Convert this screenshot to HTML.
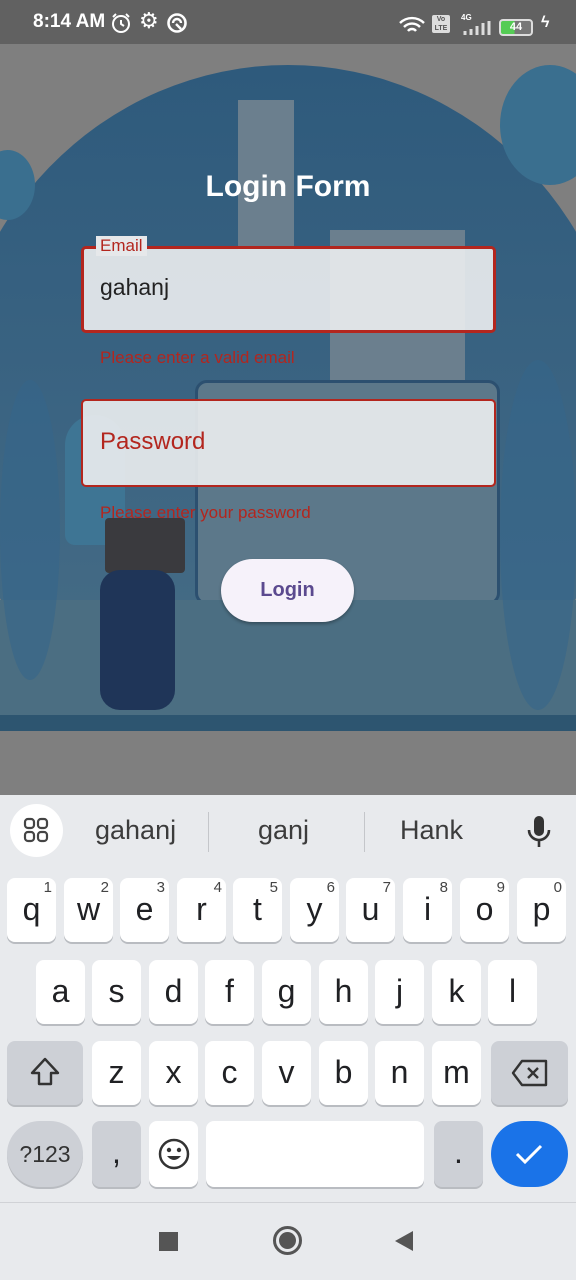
<!DOCTYPE html>
<html><head><meta charset="utf-8"><style>
*{margin:0;padding:0;box-sizing:border-box}
body{width:576px;height:1280px;overflow:hidden;background:#7f7f7f;font-family:"Liberation Sans",Roboto,sans-serif;position:relative}
.abs{position:absolute}
.key{position:absolute;background:#fff;border-radius:8px;box-shadow:0 2px 0 #b9bcc1;font-size:32px;color:#202124;text-align:center;line-height:62px;height:64px;width:49px}
.key sup{position:absolute;top:2px;right:4px;font-size:15px;line-height:15px;color:#444}
.gk{background:#cdd0d6}
</style></head><body>
<div class="abs" style="top:0;left:0;width:576px;height:44px;background:#616161;color:#fff;font-size:19px;font-weight:bold">
 <span class="abs" style="left:33px;top:11px">8:14 AM</span>
 <svg class="abs" style="left:110px;top:12px" width="22" height="22"><circle cx="11" cy="12" r="8" fill="none" stroke="#fff" stroke-width="2"/><path d="M11 8v4l3 2M3 5l3-3M19 5l-3-3" stroke="#fff" stroke-width="2" fill="none"/></svg>
 <span class="abs" style="left:139px;top:8px;font-size:22px;font-weight:normal">⚙</span>
 <svg class="abs" style="left:166px;top:12px" width="22" height="22"><circle cx="11" cy="11" r="8.5" fill="none" stroke="#fff" stroke-width="2.6"/><path d="M7 11a4 4 0 0 1 8 0M10 12l5 5" stroke="#fff" stroke-width="2.4" fill="none"/></svg>
 <svg class="abs" style="left:398px;top:16px" width="28" height="20"><path d="M2 7a17 17 0 0 1 24 0M6 11a11 11 0 0 1 16 0M10 15a5 5 0 0 1 8 0" stroke="#fff" stroke-width="2.4" fill="none"/></svg>
 <span class="abs" style="left:432px;top:15px;width:18px;height:18px;background:#ddd;border-radius:2px;font-size:7px;color:#555;text-align:center;line-height:9px">Vo<br>LTE</span>
 <span class="abs" style="left:461px;top:13px;font-size:8px">4G</span>
 <svg class="abs" style="left:462px;top:20px" width="30" height="16"><path d="M3 15v-4M9 15v-6M15 15V6M21 15V3M27 15V1" stroke="#ddd" stroke-width="3"/></svg>
 <span class="abs" style="left:499px;top:19px;width:34px;height:17px;border:2px solid #ddd;border-radius:4px;background:linear-gradient(90deg,#5c5 45%,#777 45%);font-size:11px;color:#fff;text-align:center;line-height:13px">44</span>
 <span class="abs" style="left:541px;top:14px;font-size:16px">ϟ</span>
</div>
<!-- illustration -->
<div class="abs" style="left:0;top:44px;width:576px;height:687px;overflow:hidden">
<div class="abs" style="left:-50px;top:21px;width:676px;height:700px;border-radius:50%;background:linear-gradient(180deg,#2e5a7c,#3b6482 50%,#4a6f86);"></div>
<div class="abs" style="left:500px;top:21px;width:100px;height:120px;border-radius:50%;background:#3a6f8f"></div>
<div class="abs" style="left:-20px;top:106px;width:55px;height:70px;border-radius:50%;background:#3a6f8f"></div>
<div class="abs" style="left:238px;top:56px;width:56px;height:150px;background:#6b7f8e"></div>
<div class="abs" style="left:330px;top:186px;width:135px;height:150px;background:#6b7f8e"></div>
<div class="abs" style="left:195px;top:336px;width:305px;height:225px;border:3px solid #2c5070;border-radius:12px;background:#5c788a"></div>
<div class="abs" style="left:0;top:556px;width:576px;height:115px;background:#4b6e82"></div>
<div class="abs" style="left:0;top:671px;width:576px;height:16px;background:#2d5570"></div>
<div class="abs" style="left:65px;top:371px;width:60px;height:130px;border-radius:30px 30px 10px 10px;background:#3e7594"></div>
<div class="abs" style="left:105px;top:474px;width:80px;height:55px;background:#3a3a3e;border-radius:4px"></div>
<div class="abs" style="left:100px;top:526px;width:75px;height:140px;background:#1f3558;border-radius:20px"></div>
<div class="abs" style="left:0;top:336px;width:60px;height:300px;background:#35658a;border-radius:50%;opacity:.6"></div>
<div class="abs" style="left:500px;top:316px;width:76px;height:350px;background:#35658a;border-radius:50%;opacity:.6"></div>
</div>

<div class="abs" style="left:0;top:170px;width:576px;text-align:center;color:#fff;font-size:30px;font-weight:bold">Login Form</div>
<div class="abs" style="left:81px;top:246px;width:415px;height:87px;border:3px solid #b3261e;border-radius:5px;background:rgba(236,238,240,.9)"></div>
<div class="abs" style="left:96px;top:236px;padding:0 4px;background:#e6e8ea;color:#b3261e;font-size:17px;line-height:20px">Email</div>
<div class="abs" style="left:100px;top:274px;font-size:23px;color:#222">gahanj</div>
<div class="abs" style="left:100px;top:348px;font-size:17px;color:#b3261e">Please enter a valid email</div>
<div class="abs" style="left:81px;top:399px;width:415px;height:88px;border:2px solid #b3261e;border-radius:5px;background:rgba(236,238,240,.9)"></div>
<div class="abs" style="left:100px;top:428px;font-size:24px;color:#b3261e">Password</div>
<div class="abs" style="left:100px;top:503px;font-size:17px;color:#b3261e">Please enter your password</div>
<div class="abs" style="left:221px;top:559px;width:133px;height:63px;border-radius:32px;background:#f6f2fa;box-shadow:0 2px 3px rgba(0,0,0,.3);text-align:center;line-height:63px;font-size:20px;font-weight:bold;color:#5b4a8f">Login</div>

<!-- keyboard -->
<div class="abs" style="left:0;top:795px;width:576px;height:485px;background:#e8eaed"></div>
<div class="abs" style="left:10px;top:804px;width:53px;height:53px;border-radius:50%;background:#fff"></div>
<svg class="abs" style="left:23px;top:817px" width="27" height="27"><g fill="none" stroke="#444" stroke-width="2.2"><rect x="2" y="2" width="9" height="9" rx="3"/><rect x="15" y="2" width="9" height="9" rx="3"/><rect x="2" y="15" width="9" height="9" rx="3"/><rect x="15" y="15" width="9" height="9" rx="3"/></g></svg>
<div class="abs" style="left:95px;top:815px;font-size:27px;color:#3c3c3c">gahanj</div>
<div class="abs" style="left:208px;top:812px;width:1px;height:40px;background:#c4c6ca"></div>
<div class="abs" style="left:258px;top:815px;font-size:27px;color:#3c3c3c">ganj</div>
<div class="abs" style="left:364px;top:812px;width:1px;height:40px;background:#c4c6ca"></div>
<div class="abs" style="left:400px;top:815px;font-size:27px;color:#3c3c3c">Hank</div>
<svg class="abs" style="left:526px;top:814px" width="26" height="36"><rect x="8" y="2" width="10" height="20" rx="5" fill="#333"/><path d="M3 16a10 10 0 0 0 20 0M13 26v7" stroke="#333" stroke-width="2.6" fill="none"/></svg>

<div class="key" style="left:7px;top:878px">q<sup>1</sup></div>
<div class="key" style="left:64px;top:878px">w<sup>2</sup></div>
<div class="key" style="left:120px;top:878px">e<sup>3</sup></div>
<div class="key" style="left:177px;top:878px">r<sup>4</sup></div>
<div class="key" style="left:233px;top:878px">t<sup>5</sup></div>
<div class="key" style="left:290px;top:878px">y<sup>6</sup></div>
<div class="key" style="left:346px;top:878px">u<sup>7</sup></div>
<div class="key" style="left:403px;top:878px">i<sup>8</sup></div>
<div class="key" style="left:460px;top:878px">o<sup>9</sup></div>
<div class="key" style="left:517px;top:878px">p<sup>0</sup></div>

<div class="key" style="left:36px;top:960px">a</div>
<div class="key" style="left:92px;top:960px">s</div>
<div class="key" style="left:149px;top:960px">d</div>
<div class="key" style="left:205px;top:960px">f</div>
<div class="key" style="left:262px;top:960px">g</div>
<div class="key" style="left:319px;top:960px">h</div>
<div class="key" style="left:375px;top:960px">j</div>
<div class="key" style="left:432px;top:960px">k</div>
<div class="key" style="left:488px;top:960px">l</div>

<div class="key gk" style="left:7px;top:1041px;width:76px"><svg width="34" height="34" style="margin-top:15px"><path d="M17 3L4 17h7v11h12V17h7z" fill="none" stroke="#333" stroke-width="2.4" stroke-linejoin="round"/></svg></div>
<div class="key" style="left:92px;top:1041px">z</div>
<div class="key" style="left:149px;top:1041px">x</div>
<div class="key" style="left:205px;top:1041px">c</div>
<div class="key" style="left:262px;top:1041px">v</div>
<div class="key" style="left:319px;top:1041px">b</div>
<div class="key" style="left:375px;top:1041px">n</div>
<div class="key" style="left:432px;top:1041px">m</div>
<div class="key gk" style="left:491px;top:1041px;width:77px"><svg width="38" height="30" style="margin-top:17px"><path d="M11 3h24v24H11L2 15z" fill="none" stroke="#333" stroke-width="2.4" stroke-linejoin="round"/><path d="M17 10l10 10M27 10L17 20" stroke="#333" stroke-width="2.4"/></svg></div>

<div class="key gk" style="left:7px;top:1121px;width:76px;height:66px;border-radius:33px;font-size:23px;color:#333;line-height:66px">?123</div>
<div class="key gk" style="left:92px;top:1121px;height:66px">,</div>
<div class="key" style="left:149px;top:1121px;height:66px"><svg width="34" height="34" style="margin-top:16px"><circle cx="17" cy="17" r="14" fill="none" stroke="#333" stroke-width="2.5"/><circle cx="12" cy="13" r="2.2" fill="#333"/><circle cx="22" cy="13" r="2.2" fill="#333"/><path d="M10 19q7 8 14 0z" fill="#333"/></svg></div>
<div class="key" style="left:206px;top:1121px;width:218px;height:66px"></div>
<div class="key gk" style="left:434px;top:1121px;height:66px">.</div>
<div class="abs" style="left:491px;top:1121px;width:77px;height:66px;border-radius:33px;background:#1a73e8"><svg width="77" height="66"><path d="M26 33l8 8 16-16" fill="none" stroke="#fff" stroke-width="3"/></svg></div>

<div class="abs" style="left:0;top:1202px;width:576px;height:1px;background:#d0d2d6"></div>
<div class="abs" style="left:159px;top:1232px;width:19px;height:19px;background:#555"></div>
<div class="abs" style="left:273px;top:1226px;width:29px;height:29px;border:3px solid #555;border-radius:50%"><div style="margin:3px;width:17px;height:17px;border-radius:50%;background:#555"></div></div>
<svg class="abs" style="left:393px;top:1230px" width="22" height="22"><path d="M2 11L20 1v20z" fill="#555"/></svg>
</body></html>
